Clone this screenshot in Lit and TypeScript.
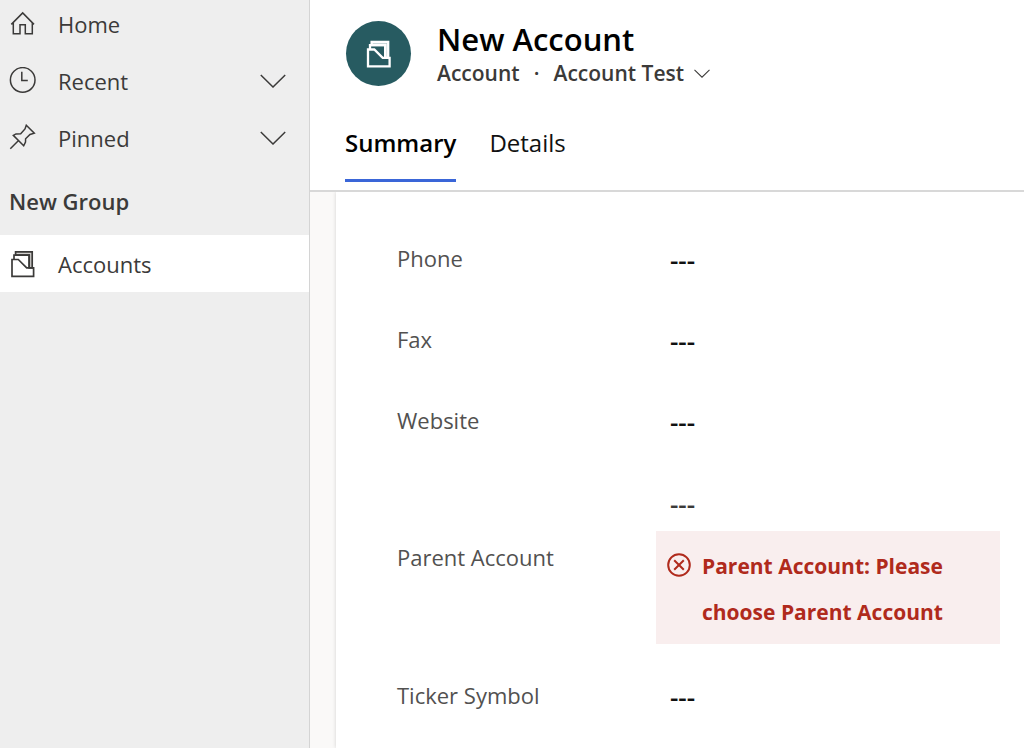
import { LitElement, html, svg, css, nothing } from "lit";
import { customElement, state } from "lit/decorators.js";

const homeIcon = svg`<path d="M2.3 14.4 13.7 2.9 25 14.4M4.3 12.6V23.8H11V14.8H16.3V23.8H23.3V12.6" />`;
const clockIcon = svg`<circle cx="13.7" cy="12.9" r="12.3" /><path d="M12.8 4.7V13.6H18.8" />`;
const pinIcon = svg`<path d="M17.3 1.2 25.3 9.2 21 10.5 16.6 14.8 16.5 18 14.7 21.8 4.3 11.4 7 9.9 11.7 9.8 16 4.9ZM9.3 16.8 1.3 24.7" />`;
const folderIcon = svg`
  <path class="sheet" d="M20.2 5H6.6V1.8H23.2V17.8H20.2Z" />
  <path d="M5 9.5V5.2H20.2V17.8" />
  <path d="M3 9.5H9.3L17.7 17.8H24.6V26.3H3Z" />`;

interface NavEntry {
  label: string;
  icon: unknown;
  expandable?: boolean;
}

interface Field {
  id: string;
  label: string;
  error?: string;
}

const NAV: NavEntry[] = [
  { label: "Home", icon: homeIcon },
  { label: "Recent", icon: clockIcon, expandable: true },
  { label: "Pinned", icon: pinIcon, expandable: true },
];

const FIELDS: Field[] = [
  { id: "phone", label: "Phone" },
  { id: "fax", label: "Fax" },
  { id: "website", label: "Website" },
  {
    id: "parent",
    label: "Parent Account",
    error: "Parent Account: Please choose Parent Account",
  },
  { id: "ticker", label: "Ticker Symbol" },
];

@customElement("app-root")
export class AppRoot extends LitElement {
  @state() private tab = "Summary";

  static styles = css`
    :host {
      display: grid;
      grid-template-columns: 310px minmax(0, 1fr);
      height: 100vh;
      overflow: hidden;
      background: #fff;
      color: #3b3a39;
      font: 22px/30px "Open Sans", "Noto Sans", sans-serif;
    }
    * {
      box-sizing: border-box;
    }
    button,
    input {
      font: inherit;
      color: inherit;
      border: 0;
      padding: 0;
      margin: 0;
      background: none;
      text-align: left;
    }
    button {
      cursor: pointer;
    }
    h1,
    h2,
    p,
    ul {
      margin: 0;
      padding: 0;
    }
    ul {
      list-style: none;
    }
    .icon {
      width: 28px;
      height: 28px;
      flex: none;
      fill: none;
      stroke: currentColor;
      stroke-width: 1.5;
    }
    .sheet {
      fill: #d2d0ce;
    }
    .sidebar {
      background: #eee;
      border-right: 1px solid #d4d4d4;
      overflow: hidden;
    }
    .top {
      margin-top: -4px;
    }
    .entry {
      display: flex;
      align-items: center;
      gap: 21px;
      width: 100%;
      height: 57px;
      padding: 0 23px 0 9px;
      color: inherit;
      text-decoration: none;
    }
    .top .entry {
      padding-bottom: 2px;
    }
    .entry.selected {
      background: #fff;
    }
    .entry.selected .icon {
      stroke-width: 1.7;
    }
    .grow {
      flex: 1;
    }
    .chevron {
      width: 26px;
      height: 14px;
      flex: none;
      fill: none;
      stroke: currentColor;
      stroke-width: 1.5;
    }
    .group {
      font-size: 22px;
      line-height: 30px;
      font-weight: 600;
      padding: 19px 9px;
    }
    .main {
      display: flex;
      flex-direction: column;
      min-width: 0;
      min-height: 0;
    }
    .header {
      padding: 21px 35px 0;
      border-bottom: 2px solid #d8d8d8;
    }
    .record {
      display: flex;
      gap: 26px;
      padding-left: 1px;
    }
    .avatar {
      display: grid;
      place-items: center;
      flex: none;
      width: 65px;
      height: 65px;
      border-radius: 50%;
      background: #275b61;
      color: #fff;
    }
    .avatar .icon {
      stroke-width: 2.3;
    }
    .avatar .sheet {
      fill: #b8cccf;
    }
    h1 {
      color: #000;
      font-size: 31px;
      line-height: 36px;
      font-weight: 600;
    }
    .sub {
      display: flex;
      align-items: center;
      font-size: 21px;
      font-weight: 600;
      line-height: 32px;
    }
    .dot {
      width: 34px;
      text-align: center;
    }
    .form-picker {
      display: flex;
      align-items: center;
      gap: 10px;
      font-weight: 600;
    }
    .form-picker .chevron {
      width: 16px;
      height: 9px;
      stroke-width: 1.7;
    }
    .tabs {
      display: flex;
      gap: 33px;
      margin-top: 34px;
    }
    .tab {
      font-size: 24px;
      line-height: 36px;
      padding: 2px 0 18px;
      color: #111;
      border-bottom: 3px solid transparent;
      margin-bottom: 8px;
    }
    .tab.active {
      color: #000;
      font-weight: 600;
      border-bottom-color: #3a66d8;
    }
    .body {
      flex: 1;
      min-height: 0;
      overflow: hidden;
      background: #faf9f8;
      padding-left: 26px;
    }
    .card {
      min-height: 100%;
      background: #fff;
      box-shadow: 0 0 4px rgba(0, 0, 0, 0.16);
      padding: 25px 24px 0 61px;
    }
    .field {
      display: grid;
      grid-template-columns: 259px minmax(0, 1fr);
      align-items: center;
      min-height: 81px;
    }
    .field label {
      color: #525150;
    }
    .value {
      display: block;
      width: 100%;
      height: 42px;
      padding: 5px 14px 0;
      color: #111;
      font-size: 26px;
      font-weight: 600;
      outline-offset: -2px;
    }
    .invalid {
      padding: 20px 0 10px;
    }
    .invalid .value {
      color: #3b3a39;
      margin-bottom: 9px;
    }
    .error {
      display: flex;
      gap: 10px;
      padding: 12px 40px 9px 10px;
      background: #f9eeee;
      color: #b02a1c;
      font-size: 21px;
      font-weight: 700;
      line-height: 46px;
    }
    .error .icon {
      width: 26px;
      height: 26px;
      margin-top: 9px;
      stroke-width: 2;
    }
  `;

  private icon(shape: unknown) {
    return html`<svg class="icon" viewBox="0 0 28 28" aria-hidden="true">${shape}</svg>`;
  }

  private chevron() {
    return html`<svg class="chevron" viewBox="0 0 26 14" aria-hidden="true">
      <path d="M.8 1 13 13 25.2 1" />
    </svg>`;
  }

  private renderEntry(e: NavEntry) {
    const content = html`${this.icon(e.icon)}<span class="grow">${e.label}</span>`;
    return html`<li>
      ${e.expandable
        ? html`<button class="entry" aria-expanded="false">${content}${this.chevron()}</button>`
        : html`<a class="entry" href="#home">${content}</a>`}
    </li>`;
  }

  private renderField(f: Field) {
    return html`<div class="field">
      <label for=${f.id}>${f.label}</label>
      <div class=${f.error ? "invalid" : "control"}>
        <input class="value" id=${f.id} type="text" value="---" />
        ${f.error
          ? html`<div class="error" role="alert">
              <svg class="icon" viewBox="0 0 26 26" aria-hidden="true">
                <circle cx="13" cy="13" r="10.8" />
                <path d="m8.2 8.2 9.6 9.6M17.8 8.2l-9.6 9.6" />
              </svg>
              <p>${f.error}</p>
            </div>`
          : nothing}
      </div>
    </div>`;
  }

  render() {
    return html`
      <nav class="sidebar" aria-label="Site map">
        <ul class="top">
          ${NAV.map((e) => this.renderEntry(e))}
        </ul>
        <h2 class="group">New Group</h2>
        <a class="entry selected" href="#accounts" aria-current="page">
          ${this.icon(folderIcon)}<span class="grow">Accounts</span>
        </a>
      </nav>
      <main class="main">
        <header class="header">
          <div class="record">
            <div class="avatar">${this.icon(folderIcon)}</div>
            <div>
              <h1>New Account</h1>
              <div class="sub">
                <span>Account</span><span class="dot">·</span>
                <button class="form-picker">Account Test ${this.chevron()}</button>
              </div>
            </div>
          </div>
          <div class="tabs" role="tablist">
            ${["Summary", "Details"].map(
              (t) => html`<button
                class="tab ${t === this.tab ? "active" : ""}"
                role="tab"
                aria-selected=${t === this.tab}
                @click=${() => (this.tab = t)}
              >${t}</button>`
            )}
          </div>
        </header>
        <div class="body">
          <form class="card">${FIELDS.map((f) => this.renderField(f))}</form>
        </div>
      </main>
    `;
  }
}
